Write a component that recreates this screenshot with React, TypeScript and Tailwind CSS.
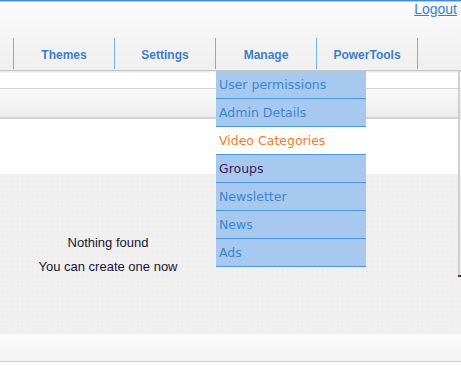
import React from "react";

const navItems = ["Themes", "Settings", "Manage", "PowerTools"];

const menu: { label: string; cls: string }[] = [
  { label: "User permissions", cls: "bg-[#a7c9ef] text-[#3a86d4]" },
  { label: "Admin Details", cls: "bg-[#a7c9ef] text-[#3a86d4]" },
  { label: "Video Categories", cls: "bg-white text-[#f47a22]" },
  { label: "Groups", cls: "bg-[#a7c9ef] text-[#3b1b58]" },
  { label: "Newsletter", cls: "bg-[#a7c9ef] text-[#3a86d4]" },
  { label: "News", cls: "bg-[#a7c9ef] text-[#3a86d4]" },
  { label: "Ads", cls: "bg-[#a7c9ef] text-[#3a86d4]" },
];

export default function App() {
  return (
    <div className="relative w-[461px] h-[365px] overflow-hidden bg-white font-['Liberation_Sans',Arial,sans-serif]">
      {/* top blue line */}
      <div className="h-px bg-[#3f8be0]" />
      <div className="h-px bg-[#a9cdf2]" />

      {/* header */}
      <div className="h-[68px] bg-gradient-to-b from-[#fbfbfb] to-[#efefef] flex flex-col">
        <div className="h-[36px] flex justify-end items-start pr-[4px]">
          <a className="text-[14px] leading-[15px] text-[#3b80cf] underline underline-offset-[1px]">Logout</a>
        </div>
        <div className="h-[31px] flex pl-[13px] items-stretch">
          {navItems.map((n, i) => (
            <div
              key={n}
              className={`${i === navItems.length - 1 ? "w-[102px] border-r" : "w-[101px]"} border-l border-[#74b2ea] flex items-center justify-center pt-[2px] text-[12px] font-bold text-[#3c7ec9]`}
            >
              {n}
            </div>
          ))}
        </div>
      </div>
      <div className="h-px bg-[#c8c8c8]" />
      <div className="h-[2px] bg-gradient-to-b from-[#e2e2e2] to-[#fafafa]" />

      {/* white band */}
      <div className="h-[15px] bg-white" />
      <div className="h-px bg-[#d2d2d2]" />
      {/* gray band */}
      <div className="h-[28px] bg-gradient-to-b from-[#fafafa] to-[#ececec]" />
      <div className="h-[2px] bg-[#d3d3d3]" />
      {/* white */}
      <div className="h-[55px] bg-white" />

      {/* content */}
      <div className="h-[160px] bg-[#f0f0f0] bg-[radial-gradient(#e6e6e6_0.6px,transparent_0.8px)] bg-[length:5px_5px] flex">
        <div className="w-[216px] pt-[57px] flex flex-col items-center text-[13px] leading-[24px] text-[#16163a]">
          <div>Nothing found</div>
          <div>You can create one now</div>
        </div>
      </div>

      {/* footer band */}
      <div className="h-[27px] bg-gradient-to-b from-[#fbfbfb] to-[#f3f3f3]" />
      <div className="h-px bg-[#cecece]" />
      <div className="h-[2px] bg-white" />

      {/* right edge line */}
      <div className="absolute left-[458px] top-[70px] w-[2px] h-[205px] bg-[#d0d0d0]" />
      <div className="absolute left-[458px] top-[275px] w-[3px] h-[2px] bg-[#4b2a7a]" />

      {/* dropdown */}
      <div className="absolute left-[216px] top-[71px] w-[150px] flex flex-col font-['DejaVu_Sans',Verdana,sans-serif]">
        {menu.map((m) => (
          <div
            key={m.label}
            className={`h-[28px] border-b border-[#4a98e0] flex items-center pl-[3px] pt-[2px] text-[12.5px] ${m.cls}`}
          >
            {m.label}
          </div>
        ))}
      </div>
    </div>
  );
}
